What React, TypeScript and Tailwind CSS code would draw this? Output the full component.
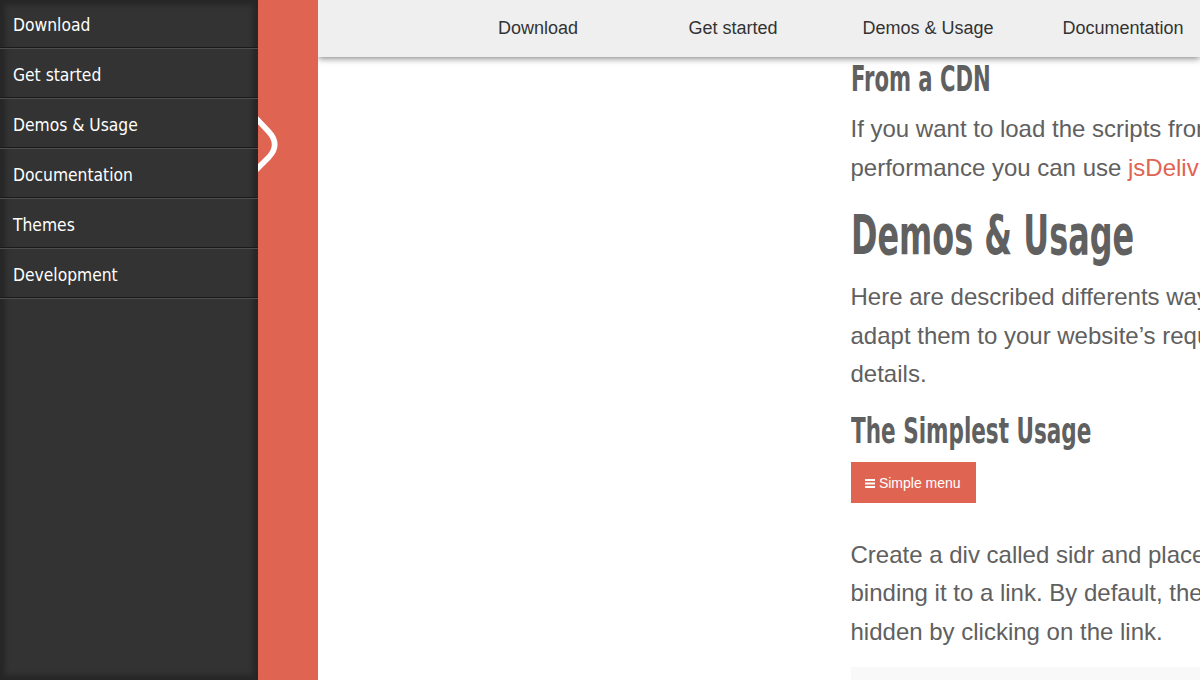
const sideItems = ["Download", "Get started", "Demos & Usage", "Documentation", "Themes", "Development"];
const navItems = ["Download", "Get started", "Demos & Usage", "Documentation"];

export default function App() {
  return (
    <div className="flex h-[680px] w-[1200px] overflow-hidden bg-white font-['Liberation_Sans',Arial,sans-serif] text-[#606060]">
      <aside className="relative z-20 w-[258px] shrink-0 bg-[#333333] shadow-[inset_0_0_5px_5px_#262626] font-['DejaVu_Sans_Condensed','DejaVu_Sans',sans-serif] text-[17.3px] text-white">
        <ul className="-mt-[2px] border-b border-[#4d4d4d]">
          {sideItems.map((t) => (
            <li key={t} className="h-[50px] border-t border-b border-t-[#4d4d4d] border-b-[#1a1a1a] pl-[13px] leading-[52px]">{t}</li>
          ))}
        </ul>
      </aside>
      <div className="relative w-[60px] shrink-0 bg-[#df6452]">
        <svg className="absolute left-0 top-[110px]" width="30" height="70" viewBox="0 0 30 70" fill="none">
          <path d="M-3 7 L11 22 Q22.4 34.5 11 47 L-3 61" stroke="#ffffff" strokeWidth="5.5" />
        </svg>
      </div>
      <div className="relative min-w-0 flex-1 overflow-hidden">
        <header className="relative z-10 flex h-[57px] w-full bg-[#efefef] pl-[122.5px] text-[18px] text-[#333333] shadow-[0_1px_7px_rgba(0,0,0,0.55)]">
          {navItems.map((t) => (
            <div key={t} className="w-[195px] shrink-0 text-center leading-[56px]">{t}</div>
          ))}
        </header>
        <main className="ml-[532.5px] w-[700px] pt-[1.3px] text-[24px] leading-[38.4px]">
          <h3 className="w-max origin-left scale-x-[0.653] font-['DejaVu_Sans_Condensed','DejaVu_Sans',sans-serif] text-[36px] font-bold leading-[42px]">From a CDN</h3>
          <p className="mt-[10px] whitespace-nowrap">If you want to load the scripts from a CDN</p>
          <p className="whitespace-nowrap">performance you can use <span className="text-[#df6452]">jsDelivr</span></p>
          <h2 className="mt-[15px] w-max origin-left scale-x-[0.633] font-['DejaVu_Sans_Condensed','DejaVu_Sans',sans-serif] text-[56px] font-bold leading-[66px]">Demos &amp; Usage</h2>
          <p className="mt-[10px] whitespace-nowrap">Here are described differents ways of usage</p>
          <p className="whitespace-nowrap">adapt them to your website’s requirements</p>
          <p>details.</p>
          <h3 className="mt-[16px] w-max origin-left scale-x-[0.665] font-['DejaVu_Sans_Condensed','DejaVu_Sans',sans-serif] text-[36px] font-bold leading-[44px]">The Simplest Usage</h3>
          <button className="mt-[8.7px] flex h-[41px] w-[125px] items-center justify-center gap-[3.5px] bg-[#df6452] pt-[2px] text-[14px] text-white">
            <svg width="10" height="9" viewBox="0 0 10 9" fill="#ffffff"><rect y="0" width="10" height="2" /><rect y="3.5" width="10" height="2" /><rect y="7" width="10" height="2" /></svg>
            Simple menu
          </button>
          <p className="mt-[33px] whitespace-nowrap">Create a div called sidr and place it</p>
          <p className="whitespace-nowrap">binding it to a link. By default, the menu</p>
          <p className="whitespace-nowrap">hidden by clicking on the link.</p>
          <div className="mt-[16px] h-[60px] bg-[#f9f9f9]" />
        </main>
      </div>
    </div>
  );
}
